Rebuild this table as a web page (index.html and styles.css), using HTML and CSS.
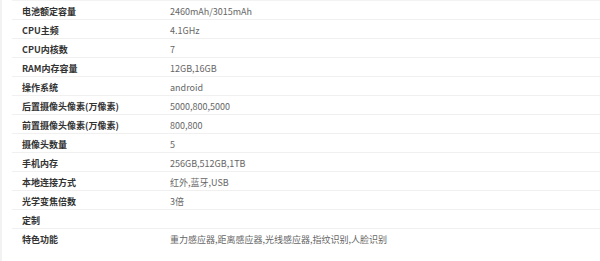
FILE: index.html
```html
<!DOCTYPE html>
<html lang="zh-CN">
<head>
<meta charset="utf-8">
<link rel="stylesheet" href="styles.css">
</head>
<body>
<div class="page">
  <div class="specs">
    <div class="row"><div class="label">电池额定容量</div><div class="value">2460mAh/3015mAh</div></div>
    <div class="row"><div class="label">CPU主频</div><div class="value">4.1GHz</div></div>
    <div class="row"><div class="label">CPU内核数</div><div class="value">7</div></div>
    <div class="row"><div class="label">RAM内存容量</div><div class="value">12GB,16GB</div></div>
    <div class="row"><div class="label">操作系统</div><div class="value">android</div></div>
    <div class="row"><div class="label">后置摄像头像素(万像素)</div><div class="value">5000,800,5000</div></div>
    <div class="row"><div class="label">前置摄像头像素(万像素)</div><div class="value">800,800</div></div>
    <div class="row"><div class="label">摄像头数量</div><div class="value">5</div></div>
    <div class="row"><div class="label">手机内存</div><div class="value">256GB,512GB,1TB</div></div>
    <div class="row"><div class="label">本地连接方式</div><div class="value">红外,蓝牙,USB</div></div>
    <div class="row"><div class="label">光学变焦倍数</div><div class="value">3倍</div></div>
    <div class="row"><div class="label">定制</div><div class="value"></div></div>
    <div class="row last"><div class="label">特色功能</div><div class="value">重力感应器,距离感应器,光线感应器,指纹识别,人脸识别</div></div>
  </div>
</div>
</body>
</html>
```
FILE: styles.css
```css
html, body {
  margin: 0;
  padding: 0;
  background: #ffffff;
}
.page {
  border-left: 2px solid #f2f2f2;
  min-height: 261px;
  box-sizing: border-box;
  padding-left: 10px;
  font-family: "Noto Sans CJK SC", "Noto Sans", sans-serif;
}
.specs {
  border-top: 1px solid #f3f3f3;
}
.row {
  display: flex;
  align-items: flex-start;
  height: 15px;
  padding-top: 3px;
  border-bottom: 1px solid #f0f0f0;
  font-size: 9px;
  line-height: 15px;
}
.row.last {
  border-bottom: none;
}
.label {
  width: 148px;
  padding-left: 10px;
  color: #333333;
  font-weight: 700;
  white-space: nowrap;
}
.value {
  color: #666666;
  white-space: nowrap;
}
```
